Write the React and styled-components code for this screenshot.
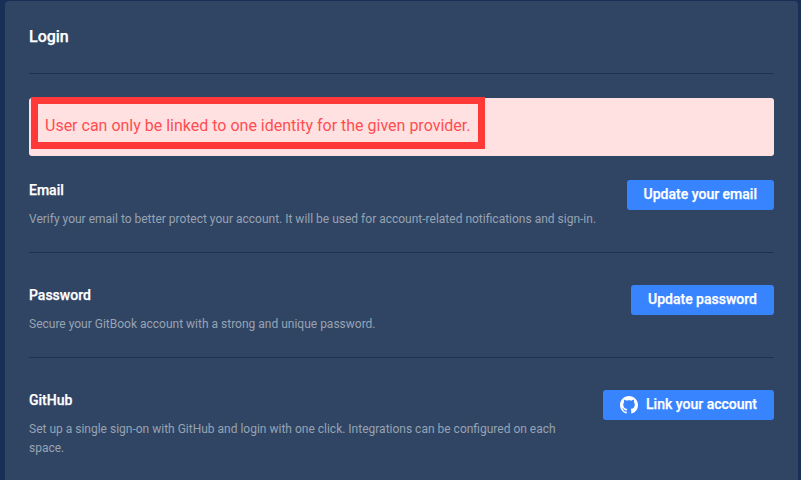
import React from "react";
import styled, { createGlobalStyle } from "styled-components";

const Global = createGlobalStyle`
  html, body { margin: 0; padding: 0; background: #183055; }
  body { font-family: Roboto, "Liberation Sans", sans-serif; width: 801px; height: 480px; overflow: hidden; }
`;
const Page = styled.div`
  height: 480px;
  padding: 1px 3px 0 5px;
  box-sizing: border-box;
  overflow: hidden;
`;
const Card = styled.section`
  background: #304563;
  border-radius: 4px 4px 0 0;
  padding: 0 24px;
  height: 600px;
`;
const Header = styled.header`
  height: 72px;
  display: flex;
  align-items: center;
  border-bottom: 1px solid #1b3252;
`;
const Title = styled.h2`
  margin: 0;
  font-size: 16px;
  line-height: 70px;
  font-weight: 500;
  color: #fff;
  -webkit-text-stroke: 0.25px #fff;
`;
const Alert = styled.div`
  position: relative;
  margin-top: 24px;
  height: 58px;
  background: #ffe1e1;
  border-radius: 3px;
  display: flex;
  align-items: center;
  padding: 0 16px 3px;
  box-sizing: border-box;
  color: #ff4d52;
  font-size: 16px;
`;
const Highlight = styled.div`
  position: absolute;
  left: 2px;
  top: -1px;
  width: 454px;
  height: 52px;
  border: 7px solid #ff3838;
  box-sizing: border-box;
`;
const Row = styled.div`
  display: flex;
  justify-content: space-between;
  align-items: flex-start;
  padding: ${p => p.$first ? "24px" : "32px"} 0 ${p => p.$last ? "0" : "23px"};
  border-bottom: ${p => p.$last ? "none" : "1px solid #1b3252"};
`;
const Info = styled.div`
  flex: 1;
  margin-right: 24px;
`;
const RowTitle = styled.h3`
  margin: 0 0 10px;
  font-size: 14px;
  line-height: 20px;
  font-weight: 500;
  color: #fff;
  -webkit-text-stroke: 0.25px #fff;
`;
const Text = styled.p`
  margin: 0;
  font-size: 12px;
  line-height: 19px;
  color: #97a3b3;
`;
const Button = styled.button`
  display: inline-flex;
  align-items: center;
  gap: 8px;
  height: 30px;
  padding: 0 17px 2px;
  border: 0;
  border-radius: 3px;
  background: #3884ff;
  color: #fff;
  font: 500 14px Roboto, "Liberation Sans", sans-serif;
  -webkit-text-stroke: 0.25px #fff;
  flex: none;
`;
const IconSvg = styled.svg`
  margin-top: 2px;
  flex: none;
`;
const GithubIcon = () => (
  <IconSvg width="18" height="18" viewBox="0 0 16 16" fill="#fff" aria-hidden="true">
    <path d="M8 0C3.58 0 0 3.58 0 8c0 3.54 2.29 6.53 5.47 7.59.4.07.55-.17.55-.38 0-.19-.01-.82-.01-1.49-2.01.37-2.53-.49-2.69-.94-.09-.23-.48-.94-.82-1.13-.28-.15-.68-.52-.01-.53.63-.01 1.08.58 1.23.82.72 1.21 1.87.87 2.33.66.07-.52.28-.87.51-1.07-1.78-.2-3.64-.89-3.64-3.95 0-.87.31-1.59.82-2.15-.08-.2-.36-1.02.08-2.12 0 0 .67-.21 2.2.82.64-.18 1.32-.27 2-.27s1.36.09 2 .27c1.53-1.04 2.2-.82 2.2-.82.44 1.1.16 1.92.08 2.12.51.56.82 1.27.82 2.15 0 3.07-1.87 3.75-3.65 3.95.29.25.54.73.54 1.48 0 1.07-.01 1.93-.01 2.2 0 .21.15.46.55.38A8.01 8.01 0 0 0 16 8c0-4.42-3.58-8-8-8z" />
  </IconSvg>
);

export default function App() {
  return (
    <Page>
      <Global />
      <Card>
        <Header><Title>Login</Title></Header>
        <Alert>
          User can only be linked to one identity for the given provider.
          <Highlight />
        </Alert>
        <Row $first>
          <Info>
            <RowTitle>Email</RowTitle>
            <Text>Verify your email to better protect your account. It will be used for account-related notifications and sign-in.</Text>
          </Info>
          <Button>Update your email</Button>
        </Row>
        <Row>
          <Info>
            <RowTitle>Password</RowTitle>
            <Text>Secure your GitBook account with a strong and unique password.</Text>
          </Info>
          <Button>Update password</Button>
        </Row>
        <Row $last>
          <Info>
            <RowTitle>GitHub</RowTitle>
            <Text>Set up a single sign-on with GitHub and login with one click. Integrations can be configured on each space.</Text>
          </Info>
          <Button><GithubIcon />Link your account</Button>
        </Row>
      </Card>
    </Page>
  );
}
